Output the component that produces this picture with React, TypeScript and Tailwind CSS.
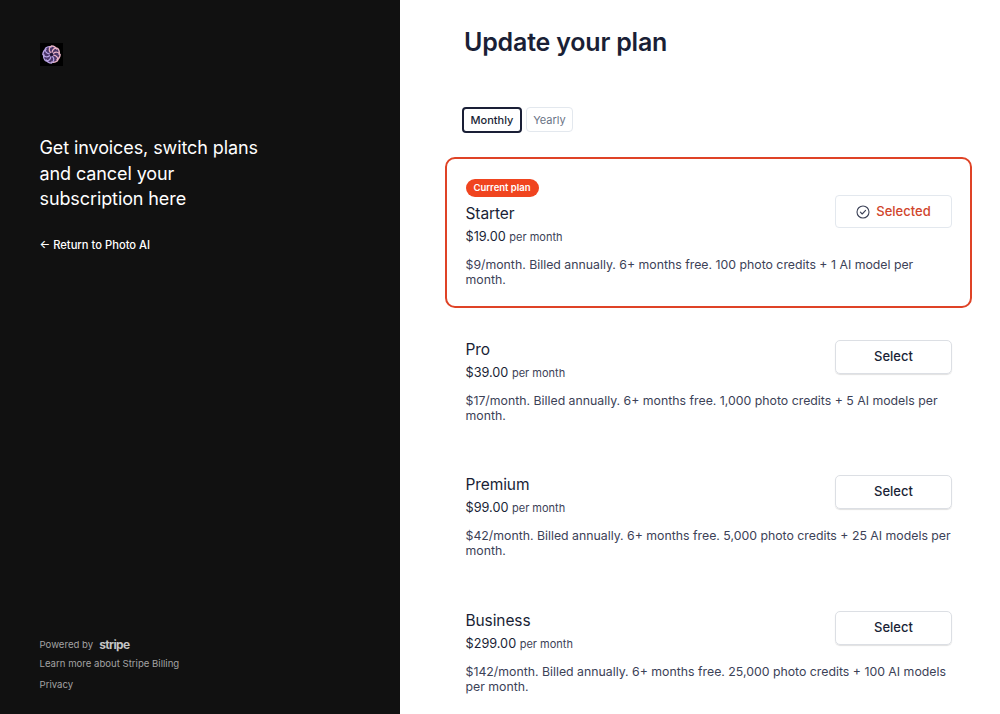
const plans = [
  { name: 'Pro', price: '$39.00', gap: 'mt-[30px]', desc: '$17/month. Billed annually. 6+ months free. 1,000 photo credits + 5 AI models per month.' },
  { name: 'Premium', price: '$99.00', gap: 'mt-[30px]', desc: '$42/month. Billed annually. 6+ months free. 5,000 photo credits + 25 AI models per month.' },
  { name: 'Business', price: '$299.00', gap: 'mt-[31px]', desc: '$142/month. Billed annually. 6+ months free. 25,000 photo credits + 100 AI models per month.' },
];

function Logo() {
  const blades = [0, 45, 90, 135, 180, 225, 270, 315];
  return (
    <div className="w-[23px] h-[23px] bg-black flex items-center justify-center">
      <svg width="19" height="19" viewBox="0 0 20 20" fill="none">
        <circle cx="10" cy="10" r="9" fill="#4a3568" />
        {blades.map((deg) => (
          <path
            key={deg}
            d="M10.6 7.6C11 5 13 2.6 16.6 3.6C18.6 6 18.6 8 18 10"
            stroke={deg < 135 || deg > 300 ? '#eab4c6' : '#b9a4e4'}
            strokeWidth="1.3"
            strokeLinecap="round"
            transform={`rotate(${deg} 10 10)`}
          />
        ))}
        <circle cx="10" cy="10" r="1.6" fill="#1d1430" />
      </svg>
    </div>
  );
}

function PlanBody({ name, price }: { name: string; price: string }) {
  return (
    <div>
      <div className="text-[15.5px] leading-[24px] text-[#1a1f36] tracking-[-0.1px]">{name}</div>
      <div className="mt-[1px] leading-[20px] text-[#1a1f36] text-[12.7px]">
        {price} <span className="text-[11px] text-[#3c4257]">per month</span>
      </div>
    </div>
  );
}

export default function App() {
  return (
    <div className="flex w-full h-[714px] overflow-hidden bg-white font-['Inter',sans-serif]">
      <aside className="w-[400px] shrink-0 bg-[#111111] flex flex-col justify-between pl-[39.5px] pt-[43px] pb-[21px] text-white">
        <div>
          <Logo />
          <h2 className="mt-[69px] w-[240px] text-[18px] leading-[25.5px] font-normal tracking-[-0.1px]">
            Get invoices, switch plans and cancel your subscription here
          </h2>
          <a className="mt-[25px] block text-[11.2px] leading-[16px] font-medium">← Return to Photo AI</a>
        </div>
        <div className="text-[9.6px] text-[#a3a3a3]">
          <div className="flex items-center gap-[6px] leading-[16px]">
            <span>Powered by</span>
            <span className="text-[12px] font-bold tracking-[-0.6px] text-[#c4c4c4]">stripe</span>
          </div>
          <div className="mt-[3px] leading-[16px]">Learn more about Stripe Billing</div>
          <div className="mt-[5px] leading-[16px]">Privacy</div>
        </div>
      </aside>

      <main className="flex-1 pl-[45px] pr-[28px] pt-[26px]">
        <h1 className="ml-[19px] text-[25px] leading-[32px] font-semibold text-[#1a1f36] tracking-[-0.2px]">
          Update your plan
        </h1>

        <div className="ml-[17px] mt-[49px] flex gap-[4px] text-[11px]">
          <div className="h-[26px] w-[60px] pt-[1px] flex items-center justify-center rounded-[4px] border-2 border-[#1a1f36] font-medium text-[#1a1f36]">
            Monthly
          </div>
          <div className="h-[25px] w-[47px] pt-[1px] flex items-center justify-center rounded-[4px] border border-[#e3e8ee] text-[#697386]">
            Yearly
          </div>
        </div>

        <section className="mt-[24px] h-[151px] rounded-[10px] border-2 border-[#df4326] pl-[18.5px] pr-[18px] pt-[20px]">
          <div className="flex items-start justify-between">
            <div className="-mt-[6px]">
              <span className="inline-flex h-[18px] w-[73px] items-center justify-center rounded-full bg-[#f0441f] text-[9.5px] font-semibold text-white">
                Current plan
              </span>
              <div className="mt-[5px]">
                <PlanBody name="Starter" price="$19.00" />
              </div>
            </div>
            <div className="mt-[16px] h-[33px] w-[117px] flex items-center justify-center gap-[6px] rounded-[4px] border border-[#e3e8ee] text-[13px] font-medium text-[#d0452b]">
              <svg width="14" height="14" viewBox="0 0 14 14" fill="none" stroke="#3c4257" strokeWidth="1.1">
                <circle cx="7" cy="7" r="6" />
                <path d="M4.4 7.2l1.8 1.8 3.4-3.6" strokeLinecap="round" strokeLinejoin="round" />
              </svg>
              Selected
            </div>
          </div>
          <p className="mt-[10px] text-[12.3px] leading-[15px] text-[#3c4257]">
            $9/month. Billed annually. 6+ months free. 100 photo credits + 1 AI model per month.
          </p>
        </section>

        {plans.map((plan) => (
          <section key={plan.name} className={`${plan.gap} h-[105px] pl-[20.5px] pr-[20px]`}>
            <div className="flex items-start justify-between">
              <PlanBody name={plan.name} price={plan.price} />
              <div className="mt-[2px] h-[34px] w-[117px] flex items-center justify-center rounded-[5px] border border-[#dcdfe4] shadow-[0_1px_1px_rgba(0,0,0,0.12)] text-[13px] font-medium text-[#1a1f36]">
                Select
              </div>
            </div>
            <p className="mt-[10px] text-[12.3px] leading-[15px] text-[#3c4257]">{plan.desc}</p>
          </section>
        ))}
      </main>
    </div>
  );
}
